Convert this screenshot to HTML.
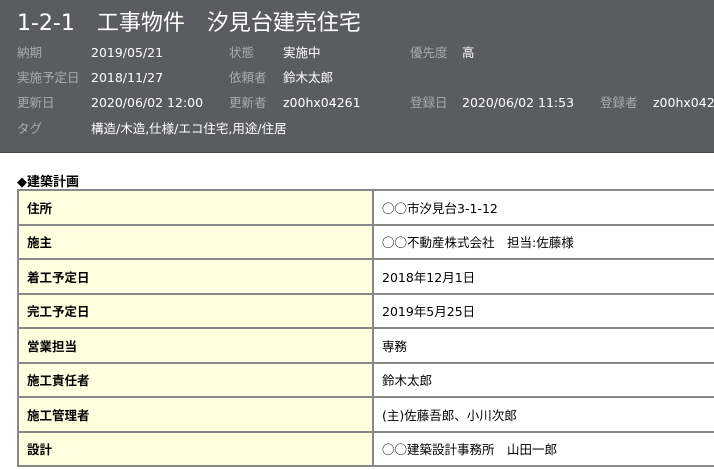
<!DOCTYPE html><html><head><meta charset="utf-8"><style>
body{margin:0;width:714px;height:470px;overflow:hidden;background:#fff;font-family:"DejaVu Sans","Noto Sans CJK JP",sans-serif;position:relative}
.c{font-family:"Noto Sans CJK JP",sans-serif}
.hd{position:absolute;left:0;top:0;width:714px;height:152px;background:#5b5c61;border-bottom:1px solid #444}
.t{position:absolute;white-space:nowrap;font-size:12.5px;line-height:16px}
.l{color:#a9aaae}.v{color:#fff}
.title{position:absolute;left:17px;top:9px;font-size:22px;color:#fff;white-space:nowrap;line-height:30px}
.sec{position:absolute;left:17px;top:171px;font-size:13px;font-weight:bold;color:#000}
table{position:absolute;left:17px;top:189px;border-collapse:collapse;width:720px}
td{border:2px solid #888;height:32.5px;font-size:12.5px;padding:0 0 0 8px;color:#000}
td.k{background:#ffffdf;font-weight:bold;width:345px}
</style></head><body>
<div class="hd">
<div class="title">1-2-1　工事物件　汐見台建売住宅</div>
<div class="t l" style="left:17px;top:45px">納期</div><div class="t v" style="left:91px;top:45px">2019/05/21</div>
<div class="t l" style="left:229px;top:45px">状態</div><div class="t v" style="left:283px;top:45px">実施中</div>
<div class="t l" style="left:410px;top:45px">優先度</div><div class="t v" style="left:462px;top:45px">高</div>
<div class="t l" style="left:17px;top:70px">実施予定日</div><div class="t v" style="left:91px;top:70px">2018/11/27</div>
<div class="t l" style="left:229px;top:70px">依頼者</div><div class="t v" style="left:283px;top:70px">鈴木太郎</div>
<div class="t l" style="left:17px;top:95px">更新日</div><div class="t v" style="left:91px;top:95px">2020/06/02 12:00</div>
<div class="t l" style="left:229px;top:95px">更新者</div><div class="t v" style="left:283px;top:95px">z00hx04261</div>
<div class="t l" style="left:410px;top:95px">登録日</div><div class="t v" style="left:462px;top:95px">2020/06/02 11:53</div>
<div class="t l" style="left:600px;top:95px">登録者</div><div class="t v" style="left:653px;top:95px">z00hx04261</div>
<div class="t l" style="left:17px;top:121px">タグ</div><div class="t v" style="left:91px;top:121px">構造/木造,仕様/エコ住宅,用途/住居</div>
</div>
<div class="sec">◆建築計画</div>
<table>
<tr><td class="k">住所</td><td><span class="c">○○</span>市汐見台3-1-12</td></tr>
<tr><td class="k">施主</td><td><span class="c">○○</span>不動産株式会社　担当:佐藤様</td></tr>
<tr><td class="k">着工予定日</td><td>2018年12月1日</td></tr>
<tr><td class="k">完工予定日</td><td>2019年5月25日</td></tr>
<tr><td class="k">営業担当</td><td>専務</td></tr>
<tr><td class="k">施工責任者</td><td>鈴木太郎</td></tr>
<tr><td class="k">施工管理者</td><td>(主)佐藤吾郎、小川次郎</td></tr>
<tr><td class="k">設計</td><td><span class="c">○○</span>建築設計事務所　山田一郎</td></tr>
</table>
</body></html>
